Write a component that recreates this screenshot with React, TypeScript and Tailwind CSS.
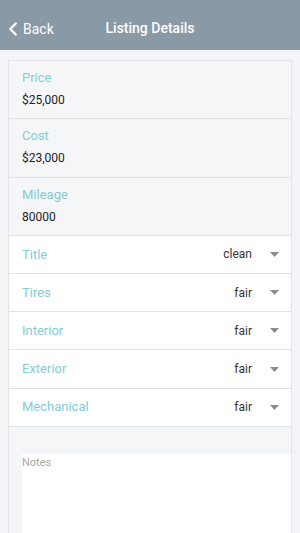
import { ChevronLeft } from "lucide-react";

const textFields = [
  { label: "Price", value: "$25,000" },
  { label: "Cost", value: "$23,000" },
  { label: "Mileage", value: "80000" },
];

const selectFields = [
  { label: "Title", value: "clean" },
  { label: "Tires", value: "fair" },
  { label: "Interior", value: "fair" },
  { label: "Exterior", value: "fair" },
  { label: "Mechanical", value: "fair" },
];

function Caret() {
  return (
    <svg width="9" height="5" viewBox="0 0 9 5" className="ml-[18px]">
      <path d="M0 0 L9 0 L4.5 5 Z" fill="#8a8a8a" />
    </svg>
  );
}

export default function App() {
  return (
    <div
      className="w-[300px] h-[533px] overflow-hidden bg-[#f3f4f7] flex flex-col"
      style={{ fontFamily: "Roboto, 'Liberation Sans', sans-serif" }}
    >
      <header className="h-[50px] shrink-0 bg-[#8a99a6] text-white flex items-end pb-[10px] relative">
        <button className="flex items-center pl-[2px] text-[14px]">
          <ChevronLeft size={22} strokeWidth={2.6} className="-mr-[1px]" />
          Back
        </button>
        <h1 className="absolute left-0 right-0 bottom-[11px] text-center text-[14px] font-medium pointer-events-none">
          Listing Details
        </h1>
      </header>

      <div className="pt-[10px] pl-[8px] pr-[8px] flex-1 flex flex-col">
        <div className="border-x border-t border-[#e3e4e7] bg-[#f5f6f8] flex-1 flex flex-col">
          {textFields.map((f) => (
            <div
              key={f.label}
              className="h-[58.3px] border-b border-[#e1e2e5] pl-[13px] pt-[8px]"
            >
              <div className="text-[13px] text-[#84ccd6] leading-[18px]">{f.label}</div>
              <div className="text-[12px] text-[#222] mt-[5px] leading-[16px]">{f.value}</div>
            </div>
          ))}

          {selectFields.map((f) => (
            <div
              key={f.label}
              className="h-[38.2px] bg-white border-b border-[#e1e2e5] pl-[13px] pr-[12px] flex items-center"
            >
              <span className="text-[13px] text-[#84ccd6] flex-1">{f.label}</span>
              <span className="text-[12px] text-[#333]">{f.value}</span>
              <Caret />
            </div>
          ))}

          <div className="pt-[27px] pl-[13px] flex-1 flex">
            <div className="flex-1 bg-white pt-[1px] text-[11px] text-[#a9a9a9]">
              Notes
            </div>
          </div>
        </div>
      </div>
    </div>
  );
}
